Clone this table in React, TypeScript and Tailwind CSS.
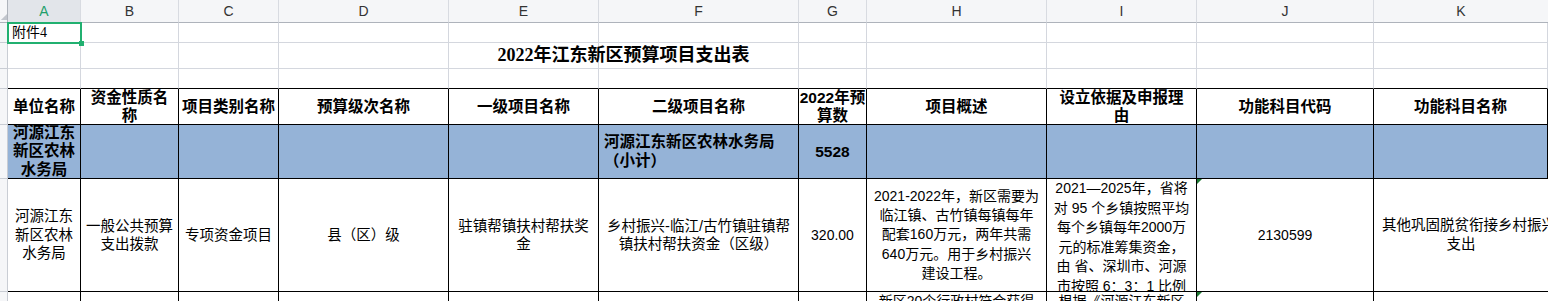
import type { ReactNode } from "react";

const cols = ["A", "B", "C", "D", "E", "F", "G", "H", "I", "J", "K"];

const grid =
  "grid grid-cols-[8px_73px_98px_100px_170px_150px_200px_68px_180px_150px_177px_174px] grid-rows-[23px_20px_26px_20px_36px_54px_113px_40px]";

const line = "border-r border-b border-[#d4d7de]";
const table = "border-r border-b border-black";

function RowHead() {
  return <div className="border-r border-b border-[#c9cdd4] bg-[#f5f6f8]" />;
}

function Cell({ className = "", children }: { className?: string; children?: ReactNode }) {
  return <div className={`overflow-hidden ${className}`}>{children}</div>;
}

function ErrorMark() {
  return (
    <svg className="absolute left-0 top-0" width="5" height="5" viewBox="0 0 5 5">
      <polygon points="0,0 5,0 0,5" fill="#1d7a33" />
    </svg>
  );
}

const center = "flex items-center justify-center text-center";
const head = `${table} ${center} text-[15.5px] font-bold leading-[18px]`;
const blue = `${table} bg-[#95b3d7]`;
const body = `${table} ${center} text-[14.5px] leading-[18.5px]`;

export default function App() {
  return (
    <div className="h-screen w-[1548px] overflow-hidden bg-white font-['Liberation_Sans','Noto_Sans_CJK_SC',sans-serif] text-black">
      <div className={grid}>
        {/* column headers */}
        <div className="flex items-end border-r border-b border-[#aeb3bb] bg-[#f5f6f8]">
          <svg width="8" height="18" viewBox="0 0 8 18">
            <polygon points="8,10 8,17 1,17" fill="#c2c6cd" />
          </svg>
        </div>
        {cols.map((c) => (
          <div
            key={c}
            className={`flex items-center justify-center border-r border-b border-r-[#d8dbe1] border-b-[#aeb3bb] text-[14px] ${
              c === "A" ? "bg-[#e2e5ea] text-[#1f9f6c]" : "bg-[#f5f6f8] text-[#333]"
            } ${c === "K" ? "border-r-0" : ""}`}
          >
            {c}
          </div>
        ))}

        {/* row 1 */}
        <RowHead />
        <div className={`relative z-10 ${line} flex items-center pl-1 text-[14px] font-['Liberation_Serif','Noto_Sans_CJK_SC',serif]`}>
          附件4
          <div className="absolute -top-px -left-px right-[-2px] bottom-[-2px] border-[2.5px] border-[#21b070]" />
          <div className="absolute -right-[4px] -bottom-[4px] h-[5px] w-[5px] bg-[#21b070]" />
        </div>
        {cols.slice(1).map((c) => (
          <Cell key={c} className={line} />
        ))}

        {/* row 2: title */}
        <RowHead />
        <Cell className={line} />
        <Cell className={line} />
        <Cell className={line} />
        <Cell className={line} />
        <div
          className={`col-span-2 ${line} flex items-center justify-center bg-[linear-gradient(to_right,transparent_149px,#d4d7de_149px,#d4d7de_150px,transparent_150px)] font-['Liberation_Serif','Noto_Sans_CJK_SC',serif] text-[18px] font-bold`}
        >
          2022年江东新区预算项目支出表
        </div>
        {cols.slice(6).map((c) => (
          <Cell key={c} className={line} />
        ))}

        {/* row 3 */}
        <RowHead />
        {cols.map((c) => (
          <Cell key={c} className="border-r border-b border-r-[#d4d7de] border-b-black" />
        ))}

        {/* row 4: table header */}
        <RowHead />
        <Cell className={head}>单位名称</Cell>
        <Cell className={head}>
          资金性质名
          <br />称
        </Cell>
        <Cell className={head}>项目类别名称</Cell>
        <Cell className={head}>预算级次名称</Cell>
        <Cell className={head}>一级项目名称</Cell>
        <Cell className={head}>二级项目名称</Cell>
        <Cell className={head}>
          2022年预
          <br />算数
        </Cell>
        <Cell className={head}>项目概述</Cell>
        <Cell className={head}>
          设立依据及申报理
          <br />由
        </Cell>
        <Cell className={head}>功能科目代码</Cell>
        <Cell className={head}>功能科目名称</Cell>

        {/* row 5: subtotal */}
        <RowHead />
        <Cell className={`${blue} ${center} text-[15.5px] font-bold leading-[18.5px]`}>
          河源江东
          <br />
          新区农林
          <br />
          水务局
        </Cell>
        <Cell className={blue} />
        <Cell className={blue} />
        <Cell className={blue} />
        <Cell className={blue} />
        <Cell className={`${blue} flex items-center pl-[5px] text-[15.5px] font-bold leading-[18.5px]`}>
          <div>
            河源江东新区农林水务局
            <br />
            （小计）
          </div>
        </Cell>
        <Cell className={`${blue} ${center} text-[15.5px] font-bold`}>5528</Cell>
        <Cell className={blue} />
        <Cell className={blue} />
        <Cell className={blue} />
        <Cell className={blue} />

        {/* row 6 */}
        <RowHead />
        <Cell className={body}>
          河源江东
          <br />
          新区农林
          <br />
          水务局
        </Cell>
        <Cell className={body}>
          一般公共预算
          <br />
          支出拨款
        </Cell>
        <Cell className={body}>专项资金项目</Cell>
        <Cell className={body}>县（区）级</Cell>
        <Cell className={body}>
          驻镇帮镇扶村帮扶奖
          <br />金
        </Cell>
        <Cell className={body}>
          乡村振兴-临江/古竹镇驻镇帮
          <br />
          镇扶村帮扶资金（区级）
        </Cell>
        <Cell className={`${body} text-[14px]`}>320.00</Cell>
        <Cell className={`${table} ${center} text-[14px] leading-[19.3px]`}>
          <div>
            2021-2022年，新区需要为
            <br />
            临江镇、古竹镇每镇每年
            <br />
            配套160万元，两年共需
            <br />
            640万元。用于乡村振兴
            <br />
            建设工程。
          </div>
        </Cell>
        <Cell className={`${table} text-center text-[14px] leading-[19.5px] whitespace-nowrap`}>
          2021—2025年，省将
          <br />
          对 95 个乡镇按照平均
          <br />
          每个乡镇每年2000万
          <br />
          元的标准筹集资金，
          <br />
          由 省、深圳市、河源
          <br />
          市按照 6：3：1 比例
        </Cell>
        <div className={`relative ${body} text-[14px]`}>
          <ErrorMark />
          2130599
        </div>
        <Cell className={`${table} flex flex-col justify-center text-[14.5px] leading-[19px] border-r-0`}>
          <div className="whitespace-nowrap pl-2">其他巩固脱贫衔接乡村振兴</div>
          <div className="text-center">支出</div>
        </Cell>

        {/* row 7 */}
        <RowHead />
        <Cell className={table} />
        <Cell className={table} />
        <Cell className={table} />
        <Cell className={table} />
        <Cell className={table} />
        <Cell className={table} />
        <Cell className={table} />
        <Cell className={`${table} text-center text-[14px] leading-[19.3px] whitespace-nowrap`}>
          新区20个行政村符合获得
        </Cell>
        <Cell className={`${table} text-center text-[14px] leading-[19.5px] whitespace-nowrap`}>
          根据《河源江东新区
        </Cell>
        <div className={`relative ${table}`}>
          <ErrorMark />
        </div>
        <Cell className={`${table} border-r-0`} />
      </div>
    </div>
  );
}
